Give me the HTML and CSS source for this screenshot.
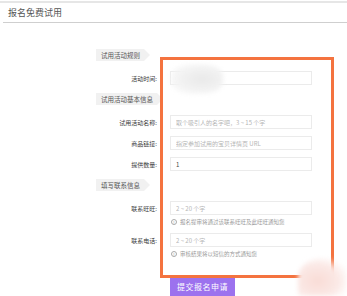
FILE: index.html
```html
<!DOCTYPE html>
<html lang="zh-CN">
<head>
    <meta charset="UTF-8">
    <meta name="viewport" content="width=device-width, initial-scale=1.0">
    <title>报名免费试用</title>
    <link rel="stylesheet" href="styles.css">
</head>
<body>
    <div class="page-top"></div>
    <h1 class="title">报名免费试用</h1>
    <form class="apply-form">
        <div class="section-tag first">试用活动规则</div>
        <div class="row">
            <label class="row-label">活动时间:</label>
            <input type="text" class="text-box">
        </div>

        <div class="section-tag">试用活动基本信息</div>
        <div class="row">
            <label class="row-label">试用活动名称:</label>
            <input type="text" class="text-box" placeholder="取个吸引人的名字吧，3 ~ 15 个字">
        </div>
        <div class="row tight">
            <label class="row-label">商品链接:</label>
            <input type="text" class="text-box" placeholder="指定参加试用的宝贝详情页 URL">
        </div>
        <div class="row tight">
            <label class="row-label">提供数量:</label>
            <input type="text" class="text-box" value="1">
        </div>

        <div class="section-tag">填写联系信息</div>
        <div class="row">
            <label class="row-label">联系旺旺:</label>
            <input type="text" class="text-box" placeholder="2 ~ 20 个字">
        </div>
        <p class="hint"><span class="hint-icon">!</span>报名提审将通过该联系旺旺及此旺旺通知您</p>
        <div class="row tight">
            <label class="row-label">联系电话:</label>
            <input type="text" class="text-box" placeholder="2 ~ 20 个字">
        </div>
        <p class="hint"><span class="hint-icon">!</span>审核结果将以短信的方式通知您</p>

        <button type="button" class="submit-btn">提交报名申请</button>
    </form>

    <div class="mosaic"></div>
    <div class="mark-box"></div>
    <div class="corner-blob"></div>
</body>
</html>
```

FILE: styles.css
```css
* {
    margin: 0;
    padding: 0;
    box-sizing: border-box;
    font-family: "Noto Sans CJK SC", "Noto Sans", sans-serif;
}

body {
    width: 347px;
    height: 296px;
    overflow: hidden;
    background: #fff;
    position: relative;
}

.page-top {
    margin-top: 1px;
    border-top: 2px solid #e6e6e6;
}

.title {
    margin-left: 3px;
    height: 20px;
    line-height: 19px;
    padding-left: 5px;
    font-size: 9px;
    font-weight: normal;
    color: #555;
    border-bottom: 1px solid #cfcfcf;
}

.apply-form {
    padding-left: 96px;
}

.section-tag {
    position: relative;
    width: fit-content;
    height: 12px;
    line-height: 12px;
    margin-top: 8px;
    padding: 0 4px 0 5px;
    font-size: 6.5px;
    color: #555;
    background: #f1f1f1;
}

.section-tag.first {
    margin-top: 26px;
}

.section-tag::after {
    content: "";
    position: absolute;
    right: -6px;
    top: 0;
    border-left: 6px solid #f1f1f1;
    border-top: 6px solid transparent;
    border-bottom: 6px solid transparent;
}

.row {
    display: flex;
    align-items: center;
    gap: 13px;
    margin-top: 10px;
    height: 14px;
}

.row.tight {
    margin-top: 7px;
}

.row-label {
    width: 61px;
    text-align: right;
    font-size: 6px;
    color: #3a3a3a;
}

.text-box {
    width: 142px;
    height: 14px;
    border: 1px solid #ebebeb;
    background: #fff;
    padding-left: 5px;
    font-size: 6px;
    color: #444;
    outline: none;
}

.text-box::placeholder {
    color: #b5b5b5;
}

.hint {
    display: flex;
    align-items: center;
    gap: 3px;
    margin: 3px 0 0 75px;
    height: 8px;
    font-size: 5.5px;
    color: #999;
}

.hint-icon {
    width: 6px;
    height: 6px;
    border: 1px solid #aaa;
    border-radius: 50%;
    font-size: 4px;
    line-height: 4px;
    text-align: center;
    color: #888;
}

.submit-btn {
    display: block;
    margin: 19px 0 0 74px;
    width: 65px;
    height: 19px;
    border: none;
    background: #9c72ee;
    color: #fff;
    font-size: 8px;
    letter-spacing: 0.5px;
}

/* blurred area over the time field */
.mosaic {
    position: absolute;
    left: 171px;
    top: 64px;
    width: 52px;
    height: 30px;
    border-radius: 40%;
    background: radial-gradient(ellipse at 60% 50%, #e9e9e9 0%, #f3f3f3 55%, rgba(255, 255, 255, 0) 100%);
    filter: blur(2px);
}

/* orange annotation frame */
.mark-box {
    position: absolute;
    left: 160px;
    top: 57px;
    width: 174px;
    height: 221px;
    border: 3px solid #f4733f;
}

.corner-blob {
    position: absolute;
    left: 298px;
    top: 258px;
    width: 49px;
    height: 38px;
    border-radius: 50% 40% 0 0;
    background: radial-gradient(ellipse at 40% 60%, #f9dcd6 0%, #fbe9e6 50%, rgba(255, 255, 255, 0) 80%);
    filter: blur(2px);
}
```
